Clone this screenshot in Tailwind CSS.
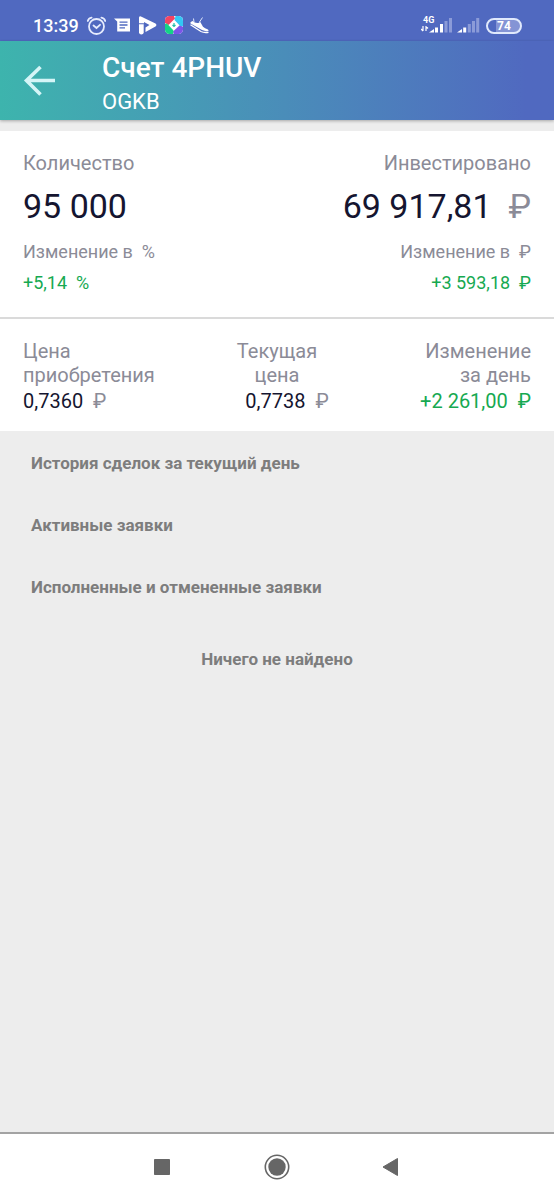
<!DOCTYPE html>
<html lang="ru">
<head>
<meta charset="utf-8">
<meta name="viewport" content="width=device-width, initial-scale=1">
<title>Счет 4PHUV</title>
<script src="https://cdn.jsdelivr.net/npm/@tailwindcss/browser@4"></script>
</head>
<body class="flex min-h-screen flex-col bg-[#ededed] font-['Roboto',sans-serif] text-[#8b8b97]">
<div class="flex h-[41px] shrink-0 items-center justify-between bg-[#5069c0] pt-[10px] pr-8 pl-[33px] text-white">
  <div class="flex items-center">
    <span class="w-[53px] text-[18px] leading-6 font-medium">13:39</span>
    <svg class="h-5 w-5" viewBox="0 0 20 20" fill="none" stroke="#e6ecfd" stroke-width="1.800" stroke-linecap="round"><circle cx="10.500" cy="10.500" r="7.500"/><path d="M7.500 9.500l3 2.500 3.500-3.200M1.800 5C2.300 3.200 3.600 2 5.600 1.700M19.200 5C18.700 3.200 17.400 2 15.400 1.700"/></svg>
    <svg class="ml-2 h-5 w-5" viewBox="0 0 20 20"><path fill="#fff" d="M0 2.500h16v13H3.200V5.500z"/><path d="M5.500 6.200h8M5.500 9h8M5.500 11.800h5.500" stroke="#5069c0" stroke-width="1.300"/></svg>
    <svg class="ml-1 h-5 w-5" viewBox="0 0 20 20" fill="#fff"><path d="M1 1.500Q1.500-.3 3.500.7L17.500 7.500Q19.300 9 17.500 10.500L7.500 16V11.500L11.500 9 6 6V7.200H1z"/><path d="M1 8.200H5.700V16.500Q5.500 18.400 3.400 18.400Q1.200 18.400 1 16.500z"/></svg>
    <svg class="ml-[6px] h-5 w-5" viewBox="0 0 20 20"><defs><clipPath id="tile"><rect x="1" y="0" width="18" height="18" rx="4.500"/></clipPath></defs><g clip-path="url(#tile)"><path fill="#fff" d="M0 0h20v20H0z"/><path fill="#f24463" d="M0 0H10L11 2.500 4.500 9 0 6.500z"/><path fill="#32c8f5" d="M11.500 0H20V9.500L17 11 10.500 4z"/><path fill="#7c55e8" d="M20 11V20H10L9 15.500 15.500 9.500z"/><path fill="#14d486" d="M0 8L3 7.500 9.500 14.500 8.500 20H0z"/><path fill="#fff" d="M10 4.500L14.500 9 10 13.500 5.500 9z"/><path d="M10 7v3.500M8.500 9L10 10.500l1.500-1.500" fill="none" stroke="#24bda9" stroke-width="1.200"/></g></svg>
    <svg class="ml-[6px] h-5 w-5" viewBox="0 0 20 20"><path fill="#fff" d="M.5 6.200L2.500 5Q5.500 7.800 9 6.800L10 5.500 13 10.800Q15 12.500 17.500 13.200Q18.800 13.800 18.500 15Q15 15.500 12 14L.5 7.500z"/><path fill="none" stroke="#fff" stroke-width="1.300" d="M.5 8.800L11 15.500Q14 17 18.500 16.300"/><path fill="none" stroke="#dfe6fb" d="M4 6L3.500 2.500M9.500 6L12.500 1.500"/></svg>
  </div>
  <div class="flex items-center">
    <svg class="h-5 w-8" viewBox="0 0 32 20"><text x="2" y="7" font-family="Roboto, sans-serif" font-size="9" font-weight="700" fill="#fff">4G</text><path d="M2 10v5M5 10v5M0 13L2 15M5 10.500l2 2" fill="none" stroke="#fff" stroke-width="1.200"/><path fill="#fff" d="M8 16.500L13 13V16.500zM14 11.500h3v5h-3zM19 8h3v8.500h-3z"/><path fill="#8b9bd8" d="M23.500 5h3v11.500h-3zM28 2h3v14.500h-3z"/></svg>
    <svg class="ml-[3px] h-5 w-6" viewBox="0 0 24 20"><path fill="#fff" d="M1 16.500L6 13V16.500zM7.200 11.500h3v5h-3z"/><path fill="#8b9bd8" d="M11.800 8h3v8.500h-3zM16 5h3v11.500h-3zM20.200 2h3v14.500h-3z"/></svg>
    <div class="ml-[6px] flex h-4 w-9 items-center justify-center rounded-full border-2 border-[#e0e9fc] bg-linear-to-r from-[#5069c0] from-25% to-[#8494d5] to-25% text-[12px] leading-none font-bold">74</div>
  </div>
</div>
<header class="flex h-[79px] shrink-0 bg-linear-to-r from-[#3db4ad] to-[#5069c0] to-95% text-white shadow-[0_1px_3px_rgba(0,0,0,0.3)]">
  <button type="button" aria-label="Назад" class="flex w-[102px] items-center pl-[22px]">
    <svg class="h-9 w-9" viewBox="0 0 36 36" fill="none" stroke="#d5f5f7" stroke-width="3.600"><path d="M33 17.500H5M18.500 4L4.500 17.500 18.500 31.500"/></svg>
  </button>
  <div class="pt-[11px]">
    <h1 class="text-[28px] leading-8 font-medium">Счет 4PHUV</h1>
    <p class="text-[22px] leading-9">OGKB</p>
  </div>
</header>
<main class="grow">
  <section class="mt-[11px] bg-white">
    <div class="flex justify-between px-[23px] pt-5 pb-[22px]">
      <div>
        <p class="text-[20px] leading-6">Количество</p>
        <p class="mt-[10px] text-[34px] leading-[42px] text-[#151530]">95 000</p>
        <p class="mt-[13px] text-[18px] leading-6">Изменение в &nbsp;%</p>
        <p class="mt-[7px] text-[18px] leading-6 text-[#16a951]">+5,14 &nbsp;%</p>
      </div>
      <div class="text-right">
        <p class="text-[20px] leading-6">Инвестировано</p>
        <p class="mt-[10px] text-[34px] leading-[42px] text-[#151530]">69 917,81 &nbsp;<span class="text-[#8b8b97]">₽</span></p>
        <p class="mt-[13px] text-[18px] leading-6">Изменение в &nbsp;₽</p>
        <p class="mt-[7px] text-[18px] leading-6 text-[#16a951]">+3 593,18 &nbsp;₽</p>
      </div>
    </div>
    <div class="grid grid-cols-3 border-t-2 border-[#dadada] px-[23px] pt-5 pb-[18px] text-[20px] leading-6">
      <div>
        <p>Цена<br>приобретения</p>
        <p class="mt-[2px]"><span class="text-[#151530]">0,7360</span> &nbsp;₽</p>
      </div>
      <div class="text-center">
        <p>Текущая<br>цена</p>
        <p class="mt-[2px] pl-5"><span class="text-[#151530]">0,7738</span> &nbsp;₽</p>
      </div>
      <div class="text-right">
        <p>Изменение<br>за день</p>
        <p class="mt-[2px] text-[#16a951]">+2 261,00 &nbsp;₽</p>
      </div>
    </div>
  </section>
  <div class="px-[31px] pt-5 text-[17px] leading-6 font-bold text-[#7d7d7d]">
    <h2>История сделок за текущий день</h2>
    <h2 class="mt-[38px]">Активные заявки</h2>
    <h2 class="mt-[38px]">Исполненные и отмененные заявки</h2>
    <p class="mt-12 text-center">Ничего не найдено</p>
  </div>
</main>
<nav class="flex h-[68px] shrink-0 items-center justify-around border-t-2 border-[#a3a3a3] bg-white px-[105px]">
  <button type="button" aria-label="Недавние"><svg class="h-7 w-7" viewBox="0 0 28 28"><rect x="6" y="6" width="16" height="16" rx=".8" fill="#666"/></svg></button>
  <button type="button" aria-label="Домой"><svg class="h-7 w-7" viewBox="0 0 28 28"><circle cx="14" cy="14" r="11.700" fill="none" stroke="#666" stroke-width="1.600"/><circle cx="14" cy="14" r="8.700" fill="#666"/></svg></button>
  <button type="button" aria-label="Назад"><svg class="h-7 w-7" viewBox="0 0 28 28"><path d="M5 14L19.500 5.500V22.500z" fill="#666" stroke="#666" stroke-linejoin="round"/></svg></button>
</nav>
</body>
</html>
